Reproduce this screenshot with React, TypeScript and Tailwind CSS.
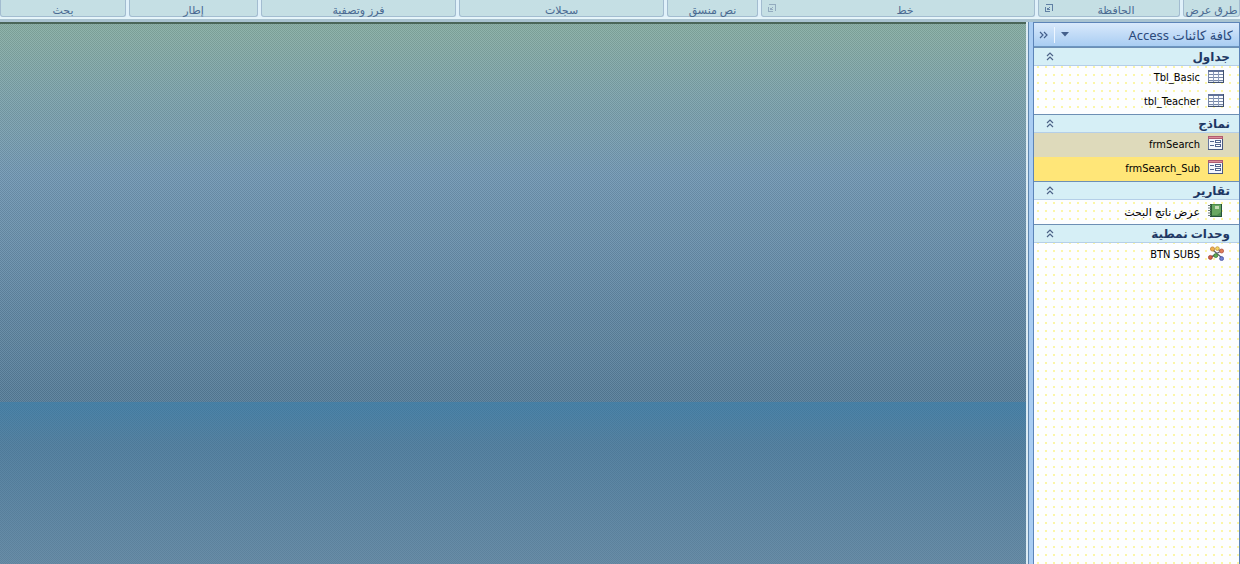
import React, { useState } from 'react';

type Kind = 'table' | 'form' | 'report' | 'module';
type Item = { name: string; dir: 'rtl' | 'ltr'; state?: 'hover' | 'selected' };
type Section = { title: string; kind: Kind; items: Item[] };

const ribbonGroups: { label: string; launcher?: 'on' | 'off' }[] = [
  { label: 'طرق عرض' },
  { label: 'الحافظة', launcher: 'on' },
  { label: 'خط', launcher: 'off' },
  { label: 'نص منسق' },
  { label: 'سجلات' },
  { label: 'فرز وتصفية' },
  { label: 'إطار' },
  { label: 'بحث' },
];

const sections: Section[] = [
  {
    title: 'جداول',
    kind: 'table',
    items: [
      { name: 'Tbl_Basic', dir: 'ltr' },
      { name: 'tbl_Teacher', dir: 'ltr' },
    ],
  },
  {
    title: 'نماذج',
    kind: 'form',
    items: [
      { name: 'frmSearch', dir: 'ltr', state: 'hover' },
      { name: 'frmSearch_Sub', dir: 'ltr', state: 'selected' },
    ],
  },
  { title: 'تقارير', kind: 'report', items: [{ name: 'عرض ناتج البحث', dir: 'rtl' }] },
  { title: 'وحدات نمطية', kind: 'module', items: [{ name: 'BTN SUBS', dir: 'ltr' }] },
];

function LauncherIcon() {
  return (
    <svg width="8" height="8" viewBox="0 0 8 8" fill="none" stroke="currentColor" shapeRendering="crispEdges">
      <path d="M1 0.5H7.5V7" />
      <path d="M0.5 3V7.5H5" />
      <path d="M5 3L2 6M2.5 3.5V5.5H4.5" />
    </svg>
  );
}

function DoubleChevronUp() {
  return (
    <svg width="8" height="9" viewBox="0 0 8 9" fill="none" stroke="#4d6388" strokeWidth="1.2">
      <path d="M1 4L4 1L7 4M1 8L4 5L7 8" />
    </svg>
  );
}

function TableIcon() {
  return (
    <svg width="16" height="13" viewBox="0 0 16 13" shapeRendering="crispEdges">
      <rect width="16" height="13" fill="#7888a8" />
      <rect width="16" height="2" fill="#5f7098" />
      <path d="M15 0H16V13H0V12H15z" fill="#40506e" />
      <g fill="#fafcff">
        {[2, 5, 8].map((y) =>
          [1, 6, 11].map((x) => <rect key={`${x}-${y}`} x={x} y={y} width="4" height="2" />),
        )}
      </g>
      <path d="M1 11H15V12H1z" fill="#dfe6f0" />
      <path d="M5 2H6V12H5zM10 2H11V12H10z" fill="#8c9cbc" />
    </svg>
  );
}

function FormIcon() {
  return (
    <svg width="15" height="14" viewBox="0 0 15 14" shapeRendering="crispEdges">
      <rect width="15" height="14" fill="#6878a0" />
      <rect x="1" y="3" width="13" height="10" fill="#f4f6fc" />
      <rect width="15" height="3" fill="#b05c72" />
      <rect x="1" y="1" width="13" height="1" fill="#dc8c98" />
      <path d="M14 3H15V14H0V13H14z" fill="#485880" />
      <path d="M2 5H6V6H2zM2 9H6V10H2z" fill="#52648f" />
      <path d="M7 4H13V7H7zM7 8H13V11H7z" fill="#52648f" />
      <path d="M8 5H12V6H8zM8 9H12V10H8z" fill="#fff" />
    </svg>
  );
}

function ReportIcon() {
  return (
    <svg width="14" height="13" viewBox="0 0 14 13">
      <path d="M2 0H14V13H2z" fill="#4c8a4c" />
      <path d="M4 1H13V8L9 11H4z" fill="#68a761" />
      <path d="M7 2H11V5H7z" fill="#c4dcb4" />
      <path d="M2 0H4V12H2z" fill="#2f6137" />
      <path d="M14 0V13H2V12H13V0z" fill="#24523a" />
      <path d="M0 1.5H3M0 4H3M0 6.5H3M0 9H3M0 11.5H3" stroke="#6d7b78" />
    </svg>
  );
}

function ModuleIcon() {
  return (
    <svg width="16" height="15" viewBox="0 0 16 15">
      <path d="M5 4L14 12M13 5L3 11M3 11L9 9M9 3L13 5" stroke="#5d5d6a" strokeWidth="1.2" fill="none" />
      <circle cx="4.5" cy="3" r="2.1" fill="#f0b04c" stroke="#b97828" strokeWidth=".7" />
      <circle cx="9.4" cy="2.6" r="1.9" fill="#f5d660" stroke="#b98c30" strokeWidth=".7" />
      <circle cx="13.6" cy="5" r="2" fill="#e08058" stroke="#a84838" strokeWidth=".7" />
      <circle cx="2.4" cy="11.4" r="2" fill="#d46048" stroke="#983828" strokeWidth=".7" />
      <circle cx="7.8" cy="9.6" r="2" fill="#60ac54" stroke="#327030" strokeWidth=".7" />
      <circle cx="13.6" cy="12.6" r="2" fill="#7080d0" stroke="#3c489c" strokeWidth=".7" />
    </svg>
  );
}

const icons: Record<Kind, React.ReactNode> = {
  table: <TableIcon />,
  form: <FormIcon />,
  report: <ReportIcon />,
  module: <ModuleIcon />,
};

const rowTone = {
  plain: '',
  hover: 'bg-[#dedabb]',
  selected: 'bg-[#ffe678]',
};

const rowFont = {
  ltr: "font-['DejaVu_Sans_Condensed','Noto_Sans',sans-serif]",
  rtl: "font-['Noto_Sans','DejaVu_Sans',sans-serif]",
};

function NavSection({ section }: { section: Section }) {
  const [open, setOpen] = useState(true);
  return (
    <section>
      <h2>
        <button
          type="button"
          aria-expanded={open}
          onClick={() => setOpen(!open)}
          className="flex h-[19px] w-full items-center justify-between border-t border-b border-t-[#6d8fb4] border-b-[#b5cfe8] bg-[#d6eff6] pr-[9px] pl-3 text-xs font-bold text-[#1f3864]"
        >
          <span className="leading-4">{section.title}</span>
          <DoubleChevronUp />
        </button>
      </h2>
      {open && (
        <ul>
          {section.items.map((item) => (
            <li key={item.name}>
              <a
                href="#"
                className={`flex h-6 items-center gap-2 pr-[15px] pb-1 text-[11px] text-black ${rowTone[item.state ?? 'plain']}`}
              >
                <span className="flex w-4 shrink-0 justify-end">{icons[section.kind]}</span>
                <span dir={item.dir} className={`pt-1 leading-4 ${rowFont[item.dir]}`}>
                  {item.name}
                </span>
              </a>
            </li>
          ))}
        </ul>
      )}
    </section>
  );
}

export default function App() {
  return (
    <div
      dir="rtl"
      className="flex h-screen flex-col overflow-hidden bg-[#a9c3d0] font-['Noto_Sans','DejaVu_Sans',sans-serif]"
    >
      <header className="border-b-2 border-[#e6f5fa] bg-[#e0f1fa]">
        <div className="grid grid-cols-[57fr_142fr_274fr_91fr_205fr_195fr_129fr_126fr] gap-[3px]">
          {ribbonGroups.map((group) => (
            <div
              key={group.label}
              className={`flex h-[17px] min-w-0 items-center rounded-b-[3px] border-x border-b border-[#a3bcd0] bg-[#c5dfe4] text-[11px] text-[#4a6a92] ${group.launcher ? 'pl-1.5' : ''}`}
            >
              <span className="flex-1 pt-1 text-center leading-4 whitespace-nowrap">{group.label}</span>
              {group.launcher && (
                <button
                  type="button"
                  aria-label={group.label}
                  className={group.launcher === 'on' ? 'text-[#6080a4]' : 'text-[#93abbf]'}
                >
                  <LauncherIcon />
                </button>
              )}
            </div>
          ))}
        </div>
      </header>

      <div className="flex min-h-0 flex-1 pt-[3px]">
        <aside className="flex w-[207px] shrink-0 flex-col border-x border-t border-[#5c84b8] bg-[#fdfeff]">
          <div className="flex h-6 shrink-0 items-center border-b border-[#6c96c0] bg-linear-to-b from-[#d9e9fb] to-[#a9cdf2] pr-1.5 pl-1">
            <h1 className="flex-1 truncate text-[13px] leading-5 text-[#2c4a7c]">كافة كائنات Access</h1>
            <button type="button" aria-label="تصفية" className="flex h-4 w-5 items-center justify-center">
              <svg width="8" height="5" viewBox="0 0 8 5">
                <path d="M0 0H8L4 4.5z" fill="#44608c" />
              </svg>
            </button>
            <span className="h-4 w-px bg-[#eef6ff]" />
            <button type="button" aria-label="طي" className="flex h-4 w-4 items-center justify-end pl-px">
              <svg width="9" height="8" viewBox="0 0 9 8" fill="none" stroke="#44608c" strokeWidth="1.2">
                <path d="M1 1L4 4L1 7M5 1L8 4L5 7" />
              </svg>
            </button>
          </div>
          <nav className="min-h-0 flex-1 overflow-hidden bg-[radial-gradient(#fbf6a8_1px,transparent_1px)] bg-[length:8px_8px]">
            {sections.map((section) => (
              <NavSection key={section.title} section={section} />
            ))}
          </nav>
        </aside>

        <div className="w-1 shrink-0 bg-[#aacdf3]" />
        <div className="w-px shrink-0 bg-[#5f87b0]" />
        <div className="w-0.5 shrink-0 bg-[#dcebf3]" />

        <main className="flex min-w-0 flex-1 flex-col border-t-2 border-[#4a6658]">
          <div className="flex-1 bg-linear-to-b from-[#87ada3] via-[#7298b4] via-28% to-[#577e9a] to-68%">
            <div className="flex h-full flex-col bg-[conic-gradient(#ffffff14_25%,#00000014_0_50%,#ffffff14_0_75%,#00000014_0)] bg-[length:2px_2px]">
              <div className="h-[70%]" />
              <div className="h-[8%] bg-linear-to-b from-[#3780ae90] to-[#4b7fa380]" />
              <div className="flex-1 bg-linear-to-b from-[#4b7fa380] to-[#6f93ad80]" />
            </div>
          </div>
        </main>
      </div>
    </div>
  );
}
